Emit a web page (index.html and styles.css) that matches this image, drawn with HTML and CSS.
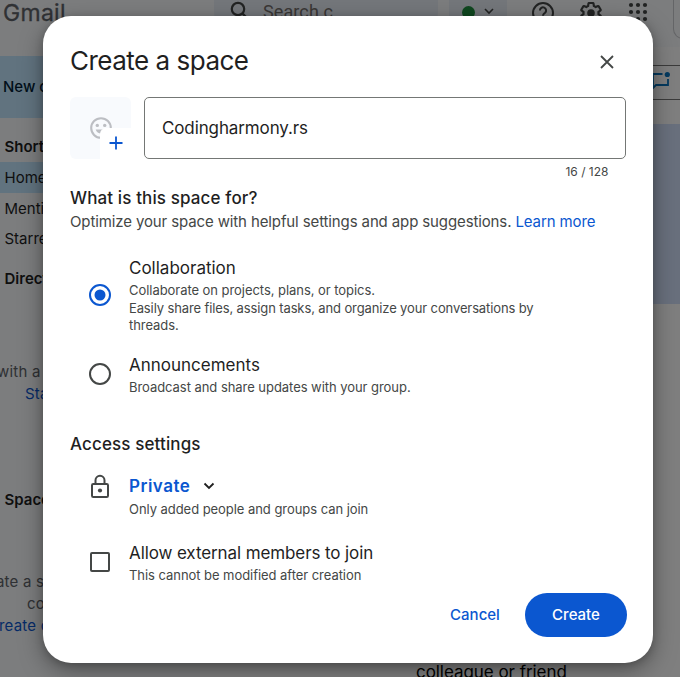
FILE: index.html
```html
<!DOCTYPE html>
<html lang="en">
<head>
<meta charset="utf-8">
<title>Gmail - Create a space</title>
<link rel="stylesheet" href="styles.css">
</head>
<body>
<div class="app">
  <header class="topbar">
    <span class="brand">Gmail</span>
    <div class="search">
      <svg class="search-icon" width="20" height="20" viewBox="0 0 20 20" fill="none" stroke="#444746" stroke-width="2.2"><circle cx="8" cy="8" r="6.2"/><path d="M12.6 12.6 18 18"/></svg>
      <span class="search-text">Search c</span>
    </div>
    <div class="status">
      <span class="dot"></span>
      <svg width="12" height="12" viewBox="0 0 12 12" fill="none" stroke="#444746" stroke-width="1.6"><path d="m2 4 4 4 4-4"/></svg>
    </div>
    <svg class="help" width="24" height="24" viewBox="0 0 24 24" fill="none" stroke="#444746" stroke-width="2"><circle cx="12" cy="12" r="10"/><path d="M8.900 9.400a3.100 3.100 0 1 1 5.200 2.300c-1.200 1-2.100 1.500-2.100 3"/><path d="M12 16.500v2"/></svg>
    <svg class="gear" width="26" height="26" viewBox="0 0 24 24"><path fill="#444746" d="M13.850 22.250h-3.700c-.740 0-1.360-.540-1.450-1.270l-.270-1.890c-.270-.140-.530-.290-.790-.460l-1.800.720c-.700.260-1.470-.030-1.810-.650L2.200 15.530c-.350-.660-.200-1.440.360-1.880l1.530-1.190c-.010-.150-.020-.300-.020-.460 0-.150.010-.310.020-.460l-1.520-1.190c-.590-.450-.740-1.260-.370-1.880l1.850-3.190c.340-.620 1.110-.900 1.790-.630l1.810.730c.260-.170.520-.320.780-.460l.270-1.910c.090-.700.710-1.250 1.440-1.250h3.700c.740 0 1.360.540 1.450 1.270l.270 1.890c.270.140.530.290.790.460l1.800-.720c.710-.260 1.480.030 1.820.650l1.840 3.180c.360.660.200 1.440-.360 1.880l-1.520 1.190c.010.150.020.300.020.460s-.010.310-.020.460l1.520 1.190c.560.450.720 1.230.370 1.860l-1.860 3.220c-.340.620-1.110.900-1.800.630l-1.800-.720c-.260.170-.520.320-.780.460l-.270 1.910c-.100.680-.720 1.220-1.460 1.220zm-3.230-2h2.760l.370-2.550.530-.220c.440-.180.880-.440 1.340-.780l.450-.340 2.380.960 1.380-2.400-2.030-1.580.070-.560c.030-.260.060-.510.060-.780s-.030-.530-.060-.780l-.070-.560 2.030-1.580-1.390-2.400-2.390.960-.450-.350c-.420-.320-.870-.580-1.330-.770l-.520-.220-.370-2.550h-2.760l-.370 2.550-.530.210c-.440.190-.880.440-1.340.790l-.450.330-2.380-.950-1.390 2.390 2.030 1.580-.070.560a7 7 0 0 0-.060.790c0 .260.020.530.060.780l.070.560-2.030 1.580 1.380 2.400 2.390-.960.450.350c.430.330.860.580 1.330.770l.530.220z"/><circle cx="12" cy="12" r="3.500" fill="#444746"/></svg>
    <svg class="grid-dots" width="20" height="20" viewBox="0 0 20 20" fill="#444746"><circle cx="3" cy="3" r="2.100"/><circle cx="10" cy="3" r="2.100"/><circle cx="17" cy="3" r="2.100"/><circle cx="3" cy="10" r="2.100"/><circle cx="10" cy="10" r="2.100"/><circle cx="17" cy="10" r="2.100"/><circle cx="3" cy="17" r="2.100"/><circle cx="10" cy="17" r="2.100"/><circle cx="17" cy="17" r="2.100"/></svg>
    <div class="account"></div>
  </header>
  <div class="columns">
    <aside class="sidebar">
      <div class="new-chat">New chat</div>
      <h4 class="group shortcuts">Shortcuts</h4>
      <div class="item active">Home</div>
      <div class="item">Mentions</div>
      <div class="item starred">Starred</div>
      <h4 class="group direct">Direct messages</h4>
      <div class="hint hint-chat"><span>with a</span><a>Start</a></div>
      <h4 class="group">Spaces</h4>
      <div class="hint hint-space"><span>ate a space</span><span class="second">collab</span><a>reate or</a></div>
    </aside>
    <main class="main">
      <div class="toolbar">
        <svg width="20" height="20" viewBox="0 0 20 20"><path d="M11.500 3H2v14l3-3h12V8" fill="none" stroke="#0b75bf" stroke-width="1.800"/><circle cx="16.300" cy="3.500" r="2.600" fill="#0b75bf"/></svg>
      </div>
      <div class="banner"></div>
      <p class="tagline">colleague or friend</p>
    </main>
  </div>
</div>
<div class="scrim">
  <section class="dialog" role="dialog">
    <div class="dialog-head">
      <h1>Create a space</h1>
      <svg class="close" width="14" height="14" viewBox="0 0 14 14" stroke="#444746" stroke-width="1.800"><path d="m1 1 12 12M13 1 1 13"/></svg>
    </div>
    <div class="name-row">
      <div class="avatar">
        <svg class="smile" width="22" height="22" viewBox="0 0 22 22"><circle cx="11" cy="11" r="9.800" fill="none" stroke="#bcbec3" stroke-width="2.100"/><circle cx="7.300" cy="8.400" r="1.700" fill="#bcbec3"/><circle cx="14.700" cy="8.400" r="1.700" fill="#bcbec3"/><path d="M5.700 12.500h10.600c-.8 2.400-2.800 4-5.300 4s-4.500-1.600-5.300-4z" fill="#bcbec3"/></svg>
        <span class="plus"><svg width="14" height="14" viewBox="0 0 14 14" stroke="#0b57d0" stroke-width="1.800"><path d="M7 .5v13M.5 7h13"/></svg></span>
      </div>
      <div class="name-field">Codingharmony.rs</div>
    </div>
    <div class="counter">16 / 128</div>
    <h2>What is this space for?</h2>
    <p class="lead">Optimize your space with helpful settings and app suggestions. <a>Learn more</a></p>
    <div class="option collab">
      <svg class="control" width="22" height="22" viewBox="0 0 22 22"><circle cx="11" cy="11" r="10" fill="none" stroke="#0b57d0" stroke-width="2"/><circle cx="11" cy="11" r="5.500" fill="#0b57d0"/></svg>
      <div><h3>Collaboration</h3><p>Collaborate on projects, plans, or topics.<br><span class="long">Easily share files, assign tasks, and organize your conversations by</span><br>threads.</p></div>
    </div>
    <div class="option announce">
      <svg class="control" width="22" height="22" viewBox="0 0 22 22"><circle cx="11" cy="11" r="10" fill="none" stroke="#444746" stroke-width="2"/></svg>
      <div><h3>Announcements</h3><p>Broadcast and share updates with your group.</p></div>
    </div>
    <h2 class="access">Access settings</h2>
    <div class="option private">
      <svg class="control" width="22" height="26" viewBox="0 0 22 26"><rect x="3" y="10" width="16" height="13" rx="1.300" fill="none" stroke="#444746" stroke-width="2"/><path d="M6.500 10V6.300a4.500 4.500 0 0 1 9 0V10" fill="none" stroke="#444746" stroke-width="2"/><circle cx="11" cy="16.500" r="2.100" fill="#444746"/></svg>
      <div><h3>Private<svg class="chev" width="12" height="8" viewBox="0 0 12 8" fill="none" stroke="#1f1f1f" stroke-width="1.800"><path d="m1.500 1.500 4.500 4.500 4.500-4.500"/></svg></h3><p>Only added people and groups can join</p></div>
    </div>
    <div class="option external">
      <span class="control checkbox"></span>
      <div><h3>Allow external members to join</h3><p>This cannot be modified after creation</p></div>
    </div>
    <div class="actions"><button class="cancel">Cancel</button><button class="create">Create</button></div>
  </section>
</div>
</body>
</html>
```
FILE: styles.css
```css
* { box-sizing: border-box; }
body { margin: 0; width: 680px; height: 677px; overflow: hidden; position: relative; font-family: Inter, "Open Sans", sans-serif; color: #1f1f1f; }
h1, h2, h3, h4, p { margin: 0; font-weight: 400; white-space: nowrap; }
svg { display: block; flex: none; }

.app { height: 677px; background: #f8fafd; overflow: hidden; }
.topbar { height: 47px; display: flex; align-items: flex-start; }
.topbar > * { flex: none; }
.brand { width: 214px; padding-left: 3px; font-size: 23px; line-height: 26px; color: #5f6368; letter-spacing: .3px; -webkit-text-stroke: .3px #5f6368; }
.search { width: 224px; height: 34px; border-radius: 0 0 22px 22px; background: #e9eef6; display: flex; padding-left: 16px; }
.search-icon { margin-top: 1px; }
.search-text { margin: 1px 0 0 13px; font: 18px/22px Roboto, sans-serif; letter-spacing: .1px; color: #75706d; }
.status { width: 58px; height: 34px; margin-left: 11px; border-radius: 0 0 17px 17px; background: #e9eef6; display: flex; padding-left: 13px; }
.dot { width: 13px; height: 13px; margin: 6px 8px 0 0; border-radius: 50%; background: #1e8e3e; }
.status svg { margin-top: 5px; }
.help { margin: 1px 0 0 24px; }
.gear { margin-left: 23px; }
.grid-dots { margin: 2px 0 0 24px; }
.account { width: 40px; height: 39px; margin-left: 25px; border: 1px solid #c9cbce; border-top: 0; border-radius: 0 0 0 10px; }
.columns { display: flex; height: 630px; }
.sidebar { width: 200px; font-size: 15px; white-space: nowrap; }
.new-chat { margin-top: 9px; height: 62px; line-height: 62px; padding-left: 3px; background: #c2e7ff; color: #001d35; font-weight: 500; }
.group { font-size: 15px; line-height: 30px; padding-left: 4.500px; font-weight: 600; }
.shortcuts { margin-top: 14px; }
.item { height: 31px; line-height: 31px; padding-left: 4.500px; }
.item.active { background: #c2e7ff; }
.item.starred { line-height: 29px; }
.direct { margin-top: 9px; }
.hint { color: #5f6368; line-height: 22px; letter-spacing: .2px; }
.hint > * { display: block; }
.hint a { color: #0b57d0; }
.hint-chat { margin: 67px 0 80px; }
.hint-chat span { margin-left: -3px; }
.hint-chat a { margin-left: 25px; }
.hint-space { margin-top: 56px; }
.hint-space span { margin-left: -4px; }
.hint-space .second { margin-left: 27px; }
.hint-space a { margin-left: -1px; }
.main { flex: 1; background: #fff; }
.toolbar { margin-top: 18px; height: 35px; border: solid #777; border-width: 1px 0; display: flex; justify-content: flex-end; padding: 5px 9px 0 0; }
.banner { height: 180px; margin-top: 24px; background: #d3e0fb; }
.tagline { margin: 356px 0 0 216px; font-size: 17px; line-height: 24px; letter-spacing: -.05px; color: #000; }

.scrim { position: absolute; inset: 0; background: rgba(0, 0, 0, .5); padding: 16px 27px 14px 43px; }
.dialog { height: 647px; background: #fff; border-radius: 28px; padding: 27px 26px 0 27px; box-shadow: 0 8px 24px rgba(0, 0, 0, .35), 0 2px 8px rgba(0, 0, 0, .2); }
.dialog-head { display: flex; justify-content: space-between; height: 54px; }
h1 { font-size: 26px; line-height: 36px; letter-spacing: -.5px; }
.close { margin: 12px 13px 0 0; }
.name-row { display: flex; gap: 13px; height: 62px; margin-right: 1px; }
.avatar { position: relative; width: 61px; height: 62px; border-radius: 6px; background: #f8fafd; padding: 20px 0 0 20px; }
.plus { position: absolute; left: 30px; top: 31px; width: 31px; height: 31px; border-radius: 6px 0 0; background: #fff; padding: 8px 0 0 9px; }
.name-field { flex: 1; border: 1px solid #747775; border-radius: 5px; padding-left: 17px; font-size: 17px; line-height: 60px; letter-spacing: -.12px; }
.counter { margin: 5px 18.500px 0; text-align: right; font-size: 12px; line-height: 16px; color: #444746; }
h2 { font-size: 17px; line-height: 24px; font-weight: 500; letter-spacing: .12px; margin-top: 6px; }
.lead { font-size: 15px; line-height: 24px; letter-spacing: -.12px; color: #444746; }
a { color: #0b57d0; }
.option { display: flex; padding-left: 19px; }
.option > div { margin-left: 18px; }
h3 { font-size: 17px; line-height: 24px; }
.option p { font-size: 13px; line-height: 17.500px; letter-spacing: -.05px; color: #444746; }
.long { letter-spacing: -.12px; }
.collab { margin-top: 22px; }
.collab .control { margin-top: 28px; }
.option h3 + p { margin-top: 2px; }
.announce { margin-top: 18px; }
.announce .control { margin-top: 10px; }
.access { margin-top: 36px; }
.private { margin-top: 18px; }
.private h3 { display: flex; align-items: center; color: #0b57d0; font-weight: 600; letter-spacing: .5px; }
.private h3 + p { margin-top: 3px; }
.chev { margin-left: 12.500px; }
.external { margin-top: 22px; }
.external h3 { letter-spacing: -.1px; }
.checkbox { width: 20px; height: 20px; margin: 11px 0 0 1px; border: 2px solid #444746; border-radius: 2px; }
.external > div { margin-left: 19px; }
.actions { display: flex; justify-content: flex-end; margin-top: 9px; }
button { border: 0; padding: 0; font: 500 15px/44px Inter, sans-serif; background: none; color: #0b57d0; height: 44px; }
.cancel { width: 50px; margin-right: 25px; }
.create { width: 102px; border-radius: 22px; background: #0b57d0; color: #fff; }
```
